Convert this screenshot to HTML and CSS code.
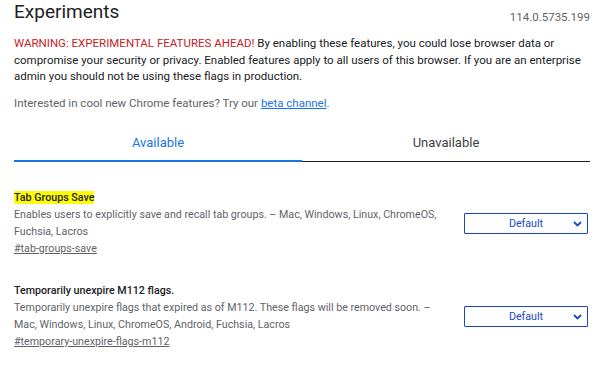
FILE: index.html
```html
<!DOCTYPE html>
<html lang="en">
  <head>
    <meta charset="UTF-8" />
    <title>Experiments</title>
    <link rel="stylesheet" href="styles.css">
  </head>
  <body>
    <div class="page">
      <div class="header">
        <h1 class="title">Experiments</h1>
        <span class="version">114.0.5735.199</span>
      </div>
      <p class="blurb">
        <span class="warning">WARNING: EXPERIMENTAL FEATURES AHEAD!</span>
        By enabling these features, you could lose browser data or compromise your security or privacy.
        Enabled features apply to all users of this browser. If you are an enterprise admin you should
        not be using these flags in production.
      </p>
      <p class="promo">Interested in cool new Chrome features? Try our <a href="#">beta channel</a>.</p>

      <div class="tabs">
        <div class="tab active">Available</div>
        <div class="tab">Unavailable</div>
      </div>

      <div class="experiment first">
        <div class="info">
          <h3 class="name"><mark>Tab Groups Save</mark></h3>
          <p class="desc">Enables users to explicitly save and recall tab groups. – Mac, Windows, Linux, ChromeOS, Fuchsia, Lacros</p>
          <a class="perma" href="#tab-groups-save">#tab-groups-save</a>
        </div>
        <div class="select">
          <span>Default</span>
          <svg class="chev" width="9" height="6" viewBox="0 0 9 6"><path d="M1 1l3.5 3.5 3.5-3.5" fill="none" stroke="#1a47c8" stroke-width="1.8"/></svg>
        </div>
      </div>

      <div class="experiment">
        <div class="info">
          <h3 class="name">Temporarily unexpire M112 flags.</h3>
          <p class="desc">Temporarily unexpire flags that expired as of M112. These flags will be removed soon. – Mac, Windows, Linux, ChromeOS, Android, Fuchsia, Lacros</p>
          <a class="perma" href="#temporary-unexpire-flags-m112">#temporary-unexpire-flags-m112</a>
        </div>
        <div class="select">
          <span>Default</span>
          <svg class="chev" width="9" height="6" viewBox="0 0 9 6"><path d="M1 1l3.5 3.5 3.5-3.5" fill="none" stroke="#1a47c8" stroke-width="1.8"/></svg>
        </div>
      </div>
    </div>
  </body>
</html>
```

FILE: styles.css
```css
html {
  font-family: Roboto, "Liberation Sans", sans-serif;
}
body {
  margin: 0;
  padding: 0;
  background: #fff;
  color: #202124;
}
.page {
  padding: 0 10px 0 14px;
}
.header {
  display: flex;
  justify-content: space-between;
  align-items: flex-end;
}
.title {
  margin: 0;
  font-size: 19px;
  font-weight: 400;
  line-height: 24px;
}
.version {
  font-size: 11.5px;
  line-height: 14px;
  color: #5f6368;
}
.blurb {
  margin: 11px 0 0;
  font-size: 11.5px;
  line-height: 16.5px;
  color: #202124;
}
.warning {
  color: #c5221f;
}
.promo {
  margin: 10px 0 0;
  font-size: 11.5px;
  line-height: 16.5px;
  color: #5f6368;
}
.promo a {
  color: #1a73e8;
}
.tabs {
  display: flex;
  margin-top: 14px;
  border-bottom: 1px solid #202124;
}
.tab {
  flex: 1;
  text-align: center;
  font-size: 13px;
  line-height: 18px;
  padding: 9px 0;
  color: #3c4043;
}
.tab.active {
  color: #1a73e8;
  box-shadow: inset 0 -2px 0 #1a73e8;
  margin-bottom: -1px;
  padding-bottom: 10px;
}
.experiment {
  display: flex;
  align-items: center;
  justify-content: space-between;
  margin-top: 25px;
}
.experiment.first {
  margin-top: 27px;
}
.info {
  width: 432px;
}
.name {
  margin: 0;
  font-size: 10.7px;
  font-weight: 500;
  line-height: 17px;
}
.name mark {
  background: #ffff00;
  color: #202124;
}
.desc {
  margin: 0;
  font-size: 10.7px;
  line-height: 17px;
  color: #5f6368;
}
.perma {
  display: block;
  font-size: 10.7px;
  line-height: 17px;
  color: #5f6368;
}
.select {
  position: relative;
  width: 122px;
  height: 19px;
  border: 1px solid #1a47c8;
  border-radius: 1px;
  margin-right: 2px;
  display: flex;
  align-items: center;
  justify-content: center;
  font-size: 10.7px;
  color: #1a47c8;
}
.chev {
  position: absolute;
  right: 5px;
  top: 7px;
}
```
